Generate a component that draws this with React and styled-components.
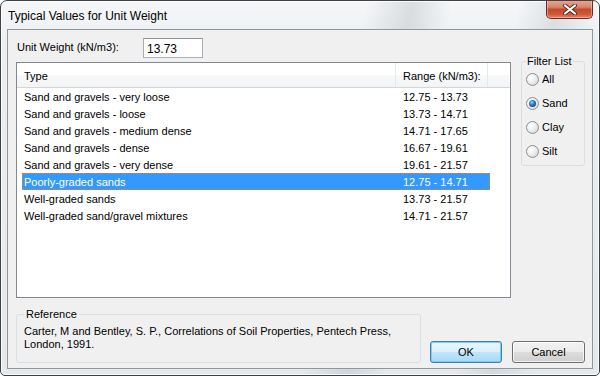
import styled, { createGlobalStyle } from "styled-components";

const GlobalStyle = createGlobalStyle`
  html, body {
    margin: 0;
    padding: 0;
    background: #ffffff;
  }
  body {
    font-family: "Liberation Sans", Arial, sans-serif;
    font-size: 11px;
    color: #000;
  }
`;

const rows = [
  ["Sand and gravels - very loose", "12.75 - 13.73"],
  ["Sand and gravels - loose", "13.73 - 14.71"],
  ["Sand and gravels - medium dense", "14.71 - 17.65"],
  ["Sand and gravels - dense", "16.67 - 19.61"],
  ["Sand and gravels - very dense", "19.61 - 21.57"],
  ["Poorly-graded sands", "12.75 - 14.71"],
  ["Well-graded sands", "13.73 - 21.57"],
  ["Well-graded sand/gravel mixtures", "14.71 - 21.57"],
];

const filters = ["All", "Sand", "Clay", "Silt"];

const App = () => {
  return (
    <>
      <GlobalStyle />
      <Window>
        <TitleBar>
          <Title>Typical Values for Unit Weight</Title>
          <CloseButton>
            <svg width="14" height="11" viewBox="0 0 14 11">
              <path
                d="M2 1.5 L12 9.5 M12 1.5 L2 9.5"
                stroke="#5a2a22"
                strokeWidth="4"
                strokeLinecap="round"
              />
              <path
                d="M2 1.5 L12 9.5 M12 1.5 L2 9.5"
                stroke="#ffffff"
                strokeWidth="2.2"
                strokeLinecap="round"
              />
            </svg>
          </CloseButton>
        </TitleBar>
        <Client>
          <TopArea>
            <LeftColumn>
              <FieldRow>
                <FieldLabel>Unit Weight (kN/m3):</FieldLabel>
                <TextBox>13.73</TextBox>
              </FieldRow>
              <ListView>
                <Header>
                  <HeaderCell $width={379}>Type</HeaderCell>
                  <HeaderCell $width={92}>Range (kN/m3):</HeaderCell>
                  <HeaderCell $width={22} $last />
                </Header>
                <Rows>
                  {rows.map(([type, range], i) => (
                    <Row key={type} $selected={i === 5}>
                      <TypeCell>{type}</TypeCell>
                      <RangeCell>{range}</RangeCell>
                    </Row>
                  ))}
                </Rows>
              </ListView>
            </LeftColumn>
            <FilterGroup>
              <Legend>Filter List</Legend>
              <RadioList>
                {filters.map((f) => (
                  <RadioRow key={f}>
                    <RadioCircle $checked={f === "Sand"} />
                    <span>{f}</span>
                  </RadioRow>
                ))}
              </RadioList>
            </FilterGroup>
          </TopArea>
          <BottomArea>
            <ReferenceGroup>
              <Legend>Reference</Legend>
              <ReferenceText>
                Carter, M and Bentley, S. P., Correlations of Soil Properties,
                Pentech Press,
                <br />
                London, 1991.
              </ReferenceText>
            </ReferenceGroup>
            <ButtonBar>
              <Button $default $width={72}>OK</Button>
              <Button $width={73}>Cancel</Button>
            </ButtonBar>
          </BottomArea>
        </Client>
      </Window>
    </>
  );
};

export default App;

const Window = styled.div`
  box-sizing: border-box;
  width: 600px;
  height: 376px;
  display: flex;
  flex-direction: column;
  padding: 0 6px 6px 6px;
  border: 1px solid #3e4246;
  border-radius: 7px 7px 5px 5px;
  background:
    linear-gradient(100deg, transparent 55%, rgba(170, 175, 180, 0.35) 62%, transparent 68%, transparent 78%, rgba(170, 175, 180, 0.3) 84%, transparent 90%),
    linear-gradient(to bottom, #f5f7f9 0%, #eceff2 12%, #e6e9ec 100%);
  box-shadow: inset 0 0 0 1px rgba(255, 255, 255, 0.8);
  overflow: hidden;
`;

const TitleBar = styled.div`
  position: relative;
  height: 28px;
  display: flex;
  align-items: center;
  flex-shrink: 0;
`;

const Title = styled.div`
  padding-left: 1px;
  margin-top: 2px;
  font-family: "Liberation Sans", Arial, sans-serif;
  font-size: 12px;
  color: #000;
`;

const CloseButton = styled.div`
  position: absolute;
  top: -1px;
  right: 0;
  width: 47px;
  height: 19px;
  box-sizing: border-box;
  border: 1px solid #6b2a1e;
  border-top: none;
  border-radius: 0 0 5px 5px;
  background: linear-gradient(
    to bottom,
    #e9a896 0%,
    #d9836b 40%,
    #c34a2c 52%,
    #cf5a37 80%,
    #e2866a 100%
  );
  box-shadow: inset 0 0 0 1px rgba(255, 220, 210, 0.45);
  display: flex;
  align-items: center;
  justify-content: center;
`;

const Client = styled.div`
  flex: 1;
  display: flex;
  flex-direction: column;
  background: #f0f0f0;
  border: 1px solid #8e969e;
  padding: 0 7px 5px 8px;
`;

const TopArea = styled.div`
  display: flex;
  align-items: flex-start;
`;

const LeftColumn = styled.div`
  width: 495px;
  padding-top: 8px;
  display: flex;
  flex-direction: column;
`;

const FieldRow = styled.div`
  display: flex;
  align-items: center;
  height: 20px;
`;

const FieldLabel = styled.div`
  width: 126px;
  padding-left: 1px;
  margin-top: -2px;
`;

const TextBox = styled.div`
  box-sizing: border-box;
  width: 60px;
  height: 20px;
  background: #fff;
  border: 1px solid #abadb3;
  border-top-color: #8f949b;
  padding: 3px 0 0 3px;
  font-size: 12px;
`;

const ListView = styled.div`
  box-sizing: border-box;
  margin-top: 4px;
  height: 236px;
  background: #fff;
  border: 1px solid #828790;
`;

const Header = styled.div`
  display: flex;
  height: 24px;
  border-bottom: 1px solid #d5d5d5;
  background: linear-gradient(to bottom, #ffffff 0%, #ffffff 50%, #f7f8fa 51%, #f3f4f6 100%);
`;

const HeaderCell = styled.div`
  box-sizing: border-box;
  width: ${(p) => p.$width}px;
  padding: 7px 0 0 7px;
  border-right: ${(p) => (p.$last ? "none" : "1px solid #e3e8ee")};
  white-space: nowrap;
`;

const Rows = styled.div`
  padding: 0 0 0 5px;
`;

const Row = styled.div`
  box-sizing: border-box;
  display: flex;
  width: 468px;
  height: 17px;
  align-items: center;
  background: ${(p) => (p.$selected ? "#3399ff" : "transparent")};
  color: ${(p) => (p.$selected ? "#fff" : "#000")};
  outline: ${(p) => (p.$selected ? "1px dotted #d9832e" : "none")};
  outline-offset: -1px;
`;

const TypeCell = styled.div`
  width: 374px;
  padding-left: 2px;
  box-sizing: border-box;
  white-space: nowrap;
`;

const RangeCell = styled.div`
  padding-left: 7px;
  white-space: nowrap;
`;

const FilterGroup = styled.fieldset`
  box-sizing: border-box;
  margin: 25px 0 0 10px;
  width: 64px;
  height: 111px;
  border: 1px solid #d5dfe5;
  border-radius: 3px;
  padding: 5px 0 8px 4px;
  min-width: 0;
`;

const Legend = styled.legend`
  padding: 0 1px;
  line-height: 13px;
  font-size: 11px;
`;

const RadioList = styled.div`
  display: flex;
  flex-direction: column;
  gap: 11px;
`;

const RadioRow = styled.div`
  display: flex;
  align-items: center;
  gap: 3px;
  height: 13px;
  line-height: 13px;
`;

const RadioCircle = styled.span`
  position: relative;
  box-sizing: border-box;
  width: 13px;
  height: 13px;
  border-radius: 50%;
  border: 1px solid #8e8f8f;
  background: radial-gradient(circle at 35% 35%, #ffffff 0%, #f0f0f0 40%, #cfcfcf 100%);
  flex-shrink: 0;

  &::after {
    content: "";
    display: ${(p) => (p.$checked ? "block" : "none")};
    position: absolute;
    left: 2px;
    top: 2px;
    width: 7px;
    height: 7px;
    border-radius: 50%;
    background: radial-gradient(circle at 40% 35%, #9fdcff 0%, #2a86c8 35%, #0f4f86 75%, #0a3560 100%);
  }
`;

const BottomArea = styled.div`
  margin-top: auto;
  display: flex;
  align-items: flex-end;
`;

const ReferenceGroup = styled.fieldset`
  box-sizing: border-box;
  margin: 0;
  width: 405px;
  height: 55px;
  border: 1px solid #d5dfe5;
  border-radius: 3px;
  padding: 4px 7px 0 7px;
  min-width: 0;

  legend {
    padding: 0 2px;
  }
`;

const ReferenceText = styled.div`
  line-height: 13px;
  white-space: nowrap;
`;

const ButtonBar = styled.div`
  display: flex;
  gap: 10px;
  margin-left: 9px;
`;

const Button = styled.div`
  box-sizing: border-box;
  width: ${(p) => p.$width}px;
  height: 22px;
  display: flex;
  align-items: center;
  justify-content: center;
  border-radius: 3px;
  border: 1px solid ${(p) => (p.$default ? "#3c7fb1" : "#707070")};
  background: ${(p) =>
    p.$default
      ? "linear-gradient(to bottom, #eaf6fd 0%, #d9f0fc 50%, #bee6fd 51%, #a7d9f5 100%)"
      : "linear-gradient(to bottom, #f2f2f2 0%, #ebebeb 50%, #dddddd 51%, #cfcfcf 100%)"};
  box-shadow: inset 0 0 0 1px
    ${(p) => (p.$default ? "rgba(120, 200, 240, 0.9)" : "rgba(255, 255, 255, 0.7)")};
  font-size: 11px;
`;
